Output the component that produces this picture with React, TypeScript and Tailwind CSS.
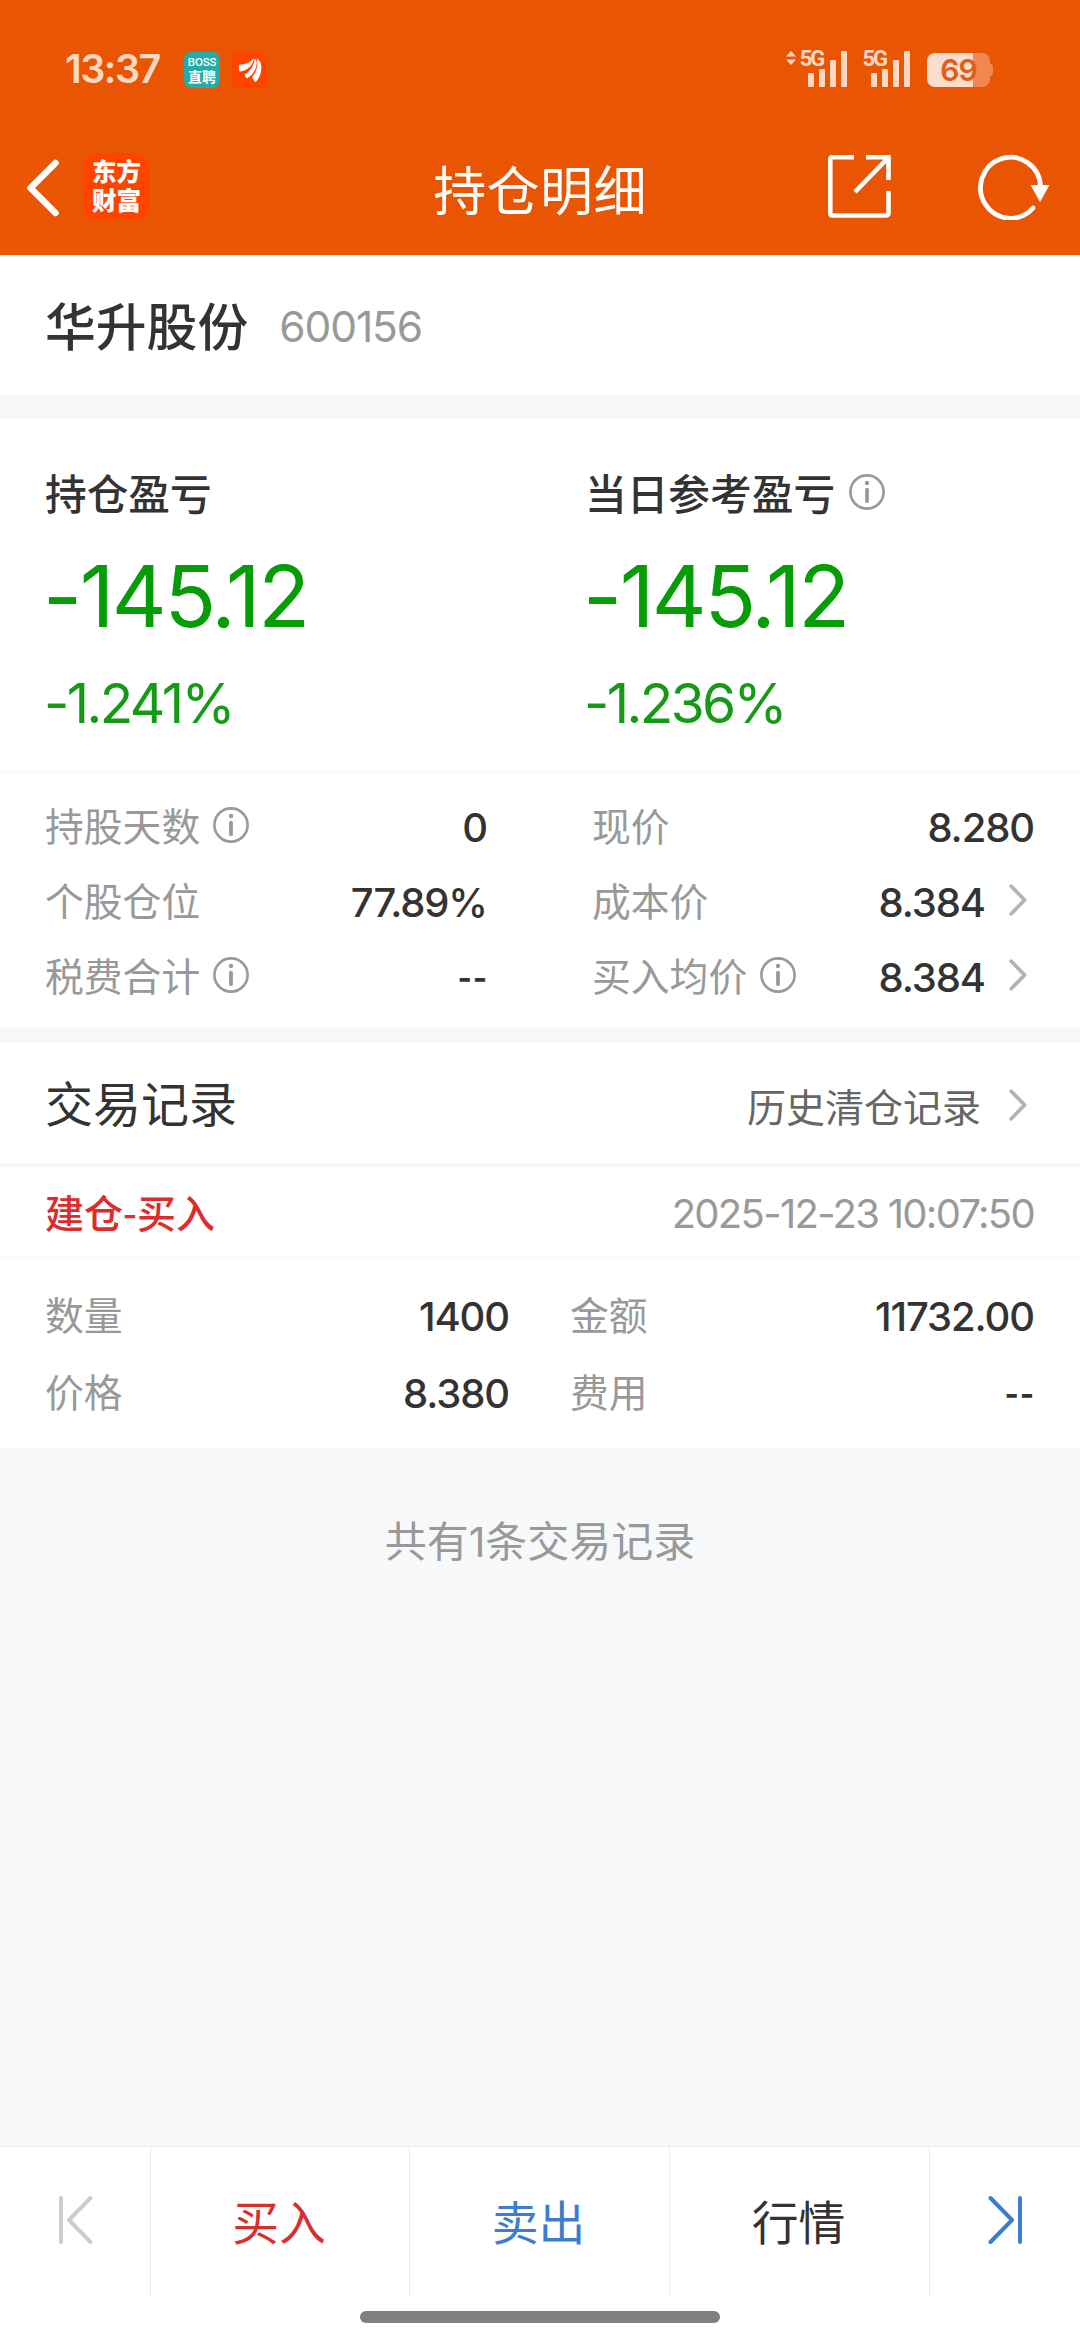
import React from "react";

const InfoIcon = ({ className = "" }: { className?: string }) => (
  <svg viewBox="0 0 36 36" className={"h-9 w-9 shrink-0 " + className} fill="none" stroke="#999" strokeWidth="2.6">
    <circle cx="18" cy="18" r="16.6" />
    <circle cx="18" cy="9" r="2.2" fill="#999" stroke="none" />
    <path d="M18 15.6V27.2" strokeWidth="3.8" strokeLinecap="round" />
  </svg>
);

const Chevron = () => (
  <svg viewBox="0 0 18 32" className="h-8 w-[18px] shrink-0" fill="none" stroke="#b3b3b3" strokeWidth="3.8" strokeLinecap="round" strokeLinejoin="round">
    <path d="M2.2 2.2L15.6 16L2.2 29.8" />
  </svg>
);

const Signal = () => (
  <div className="flex h-9 items-end gap-[5px]">
    <i className="h-[14px] w-[6px] rounded-[1px] bg-[#fdd9c4]" />
    <i className="h-[18px] w-[6px] rounded-[1px] bg-[#fdd9c4]" />
    <i className="h-[27px] w-[6px] rounded-[1px] bg-[#fdd9c4]" />
    <i className="h-9 w-[6px] rounded-[1px] bg-[#fdd9c4]" />
  </div>
);

const FiveG = () => (
  <span className="-mr-[15px] h-9 font-['Roboto'] text-[22px] leading-[16px] font-bold tracking-[-2px] text-[#fdd9c4]">5G</span>
);

const StatusBar = () => (
  <div className="flex h-[115px] items-start pt-[51px] pr-[87px] pl-[65px]">
    <span className="mt-[-1px] w-[119px] font-['Inter'] text-[39.500px] leading-[38px] font-semibold tracking-[-1.5px] text-[#fdd9c4]">13:37</span>
    <div className="mt-[1px] flex h-9 w-9 flex-col items-center rounded-[7px] bg-[#22adab] pt-[4px] text-white">
      <span className="font-['Roboto'] text-[11.500px] leading-[13px] font-medium tracking-[-0.2px]">BOSS</span>
      <span className="font-['Roboto','Noto_Sans_CJK_SC'] text-[14px] leading-[16px] font-bold">直聘</span>
    </div>
    <svg viewBox="0 0 36 36" className="mt-[1px] ml-3 h-9 w-9">
      <rect width="36" height="36" rx="7" fill="#ff4400" />
      <g fill="#fff">
        <path d="M7 12.800C13 12.500 18 11 21.800 6.300C21.500 12 16.500 18.500 7.500 19.800Q6.300 16.500 7 12.800Z" />
        <path d="M12.800 22.500C18 19.500 22 14 22.800 6.500Q25 8 24.600 12C23.800 18.500 20.500 23.500 15 26.500Q13.200 25 12.800 22.500Z" />
        <path d="M20.200 25C24.300 20.500 26.400 14 24.800 6.300Q29.500 9.500 29.400 15.500C29.400 21.500 27.200 26.500 23.600 30.200Q21 28.500 20.200 25Z" />
      </g>
    </svg>
    <div className="ml-auto flex items-start">
      <svg viewBox="0 0 10 14" className="mr-1 h-[14px] w-[10px]" fill="#fdd9c4">
        <path d="M5 0L10 5.500H0ZM5 14L0 8.500H10Z" />
      </svg>
      <FiveG />
      <Signal />
      <div className="w-[15px]" />
      <FiveG />
      <Signal />
      <div className="mt-[2px] ml-[17px] flex items-center">
        <div className="flex h-[34px] w-[63px] items-center justify-center rounded-[8px] bg-[linear-gradient(90deg,#fbdccd_73%,#f38750_73%)] font-['Inter'] text-[30px] font-semibold tracking-[-1px] text-[#dc5f1b]">69</div>
        <i className="h-3 w-[3px] rounded-r bg-[#f38750]" />
      </div>
    </div>
  </div>
);

const NavBar = () => (
  <div className="grid h-[140px] grid-cols-3 pt-[38px] text-white">
    <div className="flex items-start pl-[26px]">
      <svg viewBox="0 0 34 58" className="mt-[6px] h-[58px] w-[34px]" fill="none" stroke="#fff" strokeWidth="6.500" strokeLinecap="round" strokeLinejoin="round">
        <path d="M29.500 4L4.500 29L29.500 54" />
      </svg>
      <div className="ml-[23px] flex h-[67px] w-[67px] flex-col items-center rounded-[14px] bg-[#ff4400] pt-[5px] font-['Roboto','Noto_Sans_CJK_SC'] text-[24.500px] leading-[29px] font-black">
        <span>东方</span>
        <span>财富</span>
      </div>
    </div>
    <h1 className="-mt-[3px] text-center font-['Noto_Sans_CJK_SC'] text-[53px] leading-[76px] tracking-[0.4px]">持仓明细</h1>
    <div className="flex items-start justify-end pr-[29px]">
      <svg viewBox="0 0 64 64" className="mt-[1px] mr-[86px] h-16 w-16" fill="none" stroke="#fff" strokeWidth="4.600">
        <path d="M27 3.300H5.300Q3.300 3.300 3.300 5.300V59.500Q3.300 61.500 5.300 61.500H59Q61 61.500 61.500 59.500V37M39 3.300H61.500V26M60.500 4.500L28 38" />
      </svg>
      <svg viewBox="0 0 74 66" className="mt-[1px] h-[66px] w-[74px]" fill="none" stroke="#fff" strokeWidth="4.800">
        <path d="M63.500 32A30 30.500 0 1 0 56 54" strokeLinecap="round" />
        <path d="M53.500 31H72.500L63 48Z" fill="#fff" stroke="none" />
      </svg>
    </div>
  </div>
);

const num = "font-['Inter'] text-[40px] font-medium text-[#333]";

const Row = ({ label, value, info, arrow, className = "" }: { label: string; value: string; info?: boolean; arrow?: boolean; className?: string }) => (
  <div className={"flex items-center " + className}>
    <span className="-mt-1 text-[38.800px] text-[#999]">{label}</span>
    {info && <InfoIcon className="-mt-1 ml-[13px]" />}
    <span className={"mt-[2px] ml-auto " + num + (value === "--" ? " -mr-px origin-right scale-x-[0.78] tracking-[1px]" : " tracking-[-1.1px]")}>{value}</span>
    {arrow && (
      <div className="-mt-[3px] mr-[7px] ml-[24px]">
        <Chevron />
      </div>
    )}
  </div>
);

const Profit = ({ title, amount, rate, info }: { title: string; amount: string; rate: string; info?: boolean }) => (
  <div className="pt-[52px] pl-[45px]">
    <div className="flex h-[46px] items-center">
      <span className="-mt-[3px] text-[41.700px] font-medium text-[#333]">{title}</span>
      {info && <InfoIcon className="-mt-1 ml-[14px]" />}
    </div>
    <div className="mt-[30px] -ml-[2px] font-['Inter'] text-[85px] leading-[100px] tracking-[-2.400px] text-[#069c06]">{amount}</div>
    <div className="mt-[26px] -ml-px font-['Inter'] text-[55px] leading-[60px] tracking-[-2.600px] text-[#159a15]">{rate}</div>
  </div>
);

export default function App() {
  return (
    <div className="flex h-[2344px] w-[1080px] flex-col overflow-hidden bg-[#f7f8fa] font-['Noto_Sans_CJK_SC',sans-serif] whitespace-nowrap">
      <header className="h-[255px] bg-[#ea5504]">
        <StatusBar />
        <NavBar />
      </header>

      <section className="flex h-[140px] items-center bg-white pl-[45px] text-[#333]">
        <span className="-mt-px text-[50.800px] font-medium">华升股份</span>
        <span className="mt-[3px] ml-[31px] font-['Inter'] text-[42.500px] tracking-[-1.100px] text-[#999]">600156</span>
      </section>

      <section className="mt-6 bg-white">
        <div className="grid h-[353px] grid-cols-2">
          <Profit title="持仓盈亏" amount="-145.12" rate="-1.241%" />
          <Profit title="当日参考盈亏" amount="-145.12" rate="-1.236%" info />
        </div>
        <div className="flex h-[256px] border-t border-[#f4f5f6] pt-[16px]">
          <div className="ml-[45px] w-[442px]">
            <Row className="h-[75px]" label="持股天数" value="0" info />
            <Row className="h-[75px]" label="个股仓位" value="77.89%" />
            <Row className="h-[75px]" label="税费合计" value="--" info />
          </div>
          <div className="ml-[105px] w-[442px]">
            <Row className="h-[75px]" label="现价" value="8.280" />
            <Row className="h-[75px]" label="成本价" value="8.384" arrow />
            <Row className="h-[75px]" label="买入均价" value="8.384" info arrow />
          </div>
        </div>
      </section>

      <section className="mt-[15px] bg-white">
        <div className="flex h-[124px] items-center border-b-4 border-[#f7f8f9] pr-[53px] pl-[45px]">
          <h2 className="-mt-1 text-[48px] text-[#333]">交易记录</h2>
          <span className="mt-1 mr-[28px] ml-auto text-[39px] text-[#666]">历史清仓记录</span>
          <div className="mt-1">
            <Chevron />
          </div>
        </div>
        <div className="flex h-[91px] items-center justify-between border-b border-[#f4f5f6] pr-[46px] pl-[45px]">
          <span className="-mt-[2px] text-[39px] font-medium text-[#dd2c2c]">建仓-买入</span>
          <span className="mt-[3px] font-['Inter'] text-[40px] tracking-[-1.700px] text-[#999]">2025-12-23 10:07:50</span>
        </div>
        <div className="flex h-[190px] pt-[19px]">
          <div className="ml-[45px] w-[464px]">
            <Row className="h-[77px]" label="数量" value="1400" />
            <Row className="h-[77px]" label="价格" value="8.380" />
          </div>
          <div className="ml-[61px] w-[464px]">
            <Row className="h-[77px]" label="金额" value="11732.00" />
            <Row className="h-[77px]" label="费用" value="--" />
          </div>
        </div>
      </section>

      <p className="mt-[61px] text-center text-[42px] leading-[60px] text-[#999]">
        共有<span className="font-['Inter'] text-[41px]">1</span>条交易记录
      </p>

      <footer className="mt-auto h-[198px] border-t border-[#ebebeb] bg-white">
        <nav className="flex h-[150px] divide-x divide-[#ebebeb] text-[46.800px] leading-[146px]">
          <div className="w-[151px] pt-[48px] pl-[58px]">
            <svg viewBox="0 0 36 50" className="h-[50px] w-9" fill="none" stroke="#ccc" strokeWidth="4" strokeLinecap="round" strokeLinejoin="round">
              <path d="M3 3V47M32.500 3L11 25L32.500 47" />
            </svg>
          </div>
          <div className="w-[259px] pr-[2px] text-center text-[#d92e2e]">买入</div>
          <div className="w-[260px] pr-[2px] text-center text-[#3c7dcf]">卖出</div>
          <div className="w-[260px] pr-[2px] text-center text-[#333]">行情</div>
          <div className="w-[150px] pt-[48px] pl-[57px]">
            <svg viewBox="0 0 36 50" className="h-[50px] w-9" fill="none" stroke="#3c7dcf" strokeWidth="4" strokeLinecap="round" strokeLinejoin="round">
              <path d="M33 3V47M3.500 3L25 25L3.500 47" />
            </svg>
          </div>
        </nav>
        <div className="mx-auto mt-[14px] h-3 w-[360px] rounded-full bg-[#808080]" />
      </footer>
    </div>
  );
}
